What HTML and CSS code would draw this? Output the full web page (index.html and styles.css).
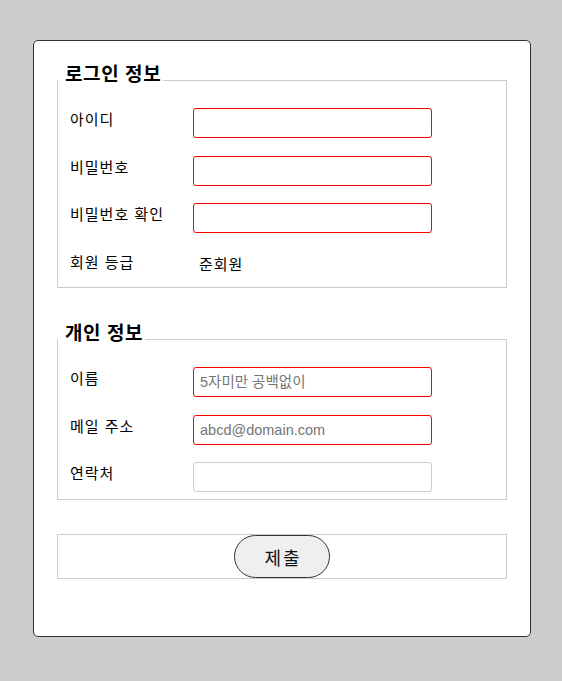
FILE: index.html
```html
<!DOCTYPE html>
<html lang="ko">
<head>
<meta charset="utf-8">
<title>회원 가입</title>
<link rel="stylesheet" href="styles.css">
</head>
<body>
<form class="card">
  <fieldset class="group group-first">
    <legend class="group-title">로그인 정보</legend>
    <div class="rows">
      <label class="label" for="uid">아이디</label>
      <input class="field invalid" id="uid" type="text">
      <label class="label" for="pw">비밀번호</label>
      <input class="field invalid" id="pw" type="password">
      <label class="label" for="pw2">비밀번호 확인</label>
      <input class="field invalid" id="pw2" type="password">
      <span class="label">회원 등급</span>
      <span class="value">준회원</span>
    </div>
  </fieldset>
  <fieldset class="group group-second">
    <legend class="group-title">개인 정보</legend>
    <div class="rows">
      <label class="label" for="name">이름</label>
      <input class="field invalid" id="name" type="text" placeholder="5자미만 공백없이">
      <label class="label" for="mail">메일 주소</label>
      <input class="field invalid" id="mail" type="text" placeholder="abcd@domain.com">
      <label class="label" for="tel">연락처</label>
      <input class="field" id="tel" type="text">
    </div>
  </fieldset>
  <div class="actions">
    <button class="submit" type="button">제출</button>
  </div>
</form>
</body>
</html>
```
FILE: styles.css
```css
html, body {
  margin: 0;
  padding: 0;
  background: #cccccc;
}
body {
  font-family: "Liberation Sans", "Noto Sans CJK KR", sans-serif;
  color: #000;
  min-height: 681px;
}
.card {
  box-sizing: border-box;
  width: 498px;
  margin: 40px 0 0 33px;
  padding: 24px 23px 57px 23px;
  background: #fff;
  border: 1px solid #333;
  border-radius: 5px;
}
.group {
  margin: 0;
  padding: 13px 12px 7px 12px;
  border: 1px solid #cccccc;
  min-width: 0;
}
.group-first {
  padding-bottom: 6.5px;
}
.group-second {
  margin-top: 36px;
}
.group-title {
  margin-left: -12px;
  padding: 0 2px 10px 7px;
  font-size: 19px;
  line-height: 20px;
  letter-spacing: 0.6px;
  font-weight: bold;
}
.rows {
  display: grid;
  grid-template-columns: 123px 239px;
  grid-auto-rows: 30px;
  row-gap: 17.5px;
}
.label {
  font-size: 15px;
  line-height: 24px;
  letter-spacing: 1px;
  align-self: start;
}
.value {
  font-size: 15px;
  line-height: 28px;
  letter-spacing: 1px;
  padding-left: 6px;
}
.field {
  box-sizing: border-box;
  width: 239px;
  height: 30px;
  margin: 0;
  padding: 0 6px;
  border: 1px solid #cccccc;
  border-radius: 3px;
  font-family: "Liberation Sans", "Noto Sans CJK KR", sans-serif;
  font-size: 14.5px;
  background: #fff;
  outline: none;
}
.field.invalid {
  border-color: #ff0000;
}
.field::placeholder {
  color: #757575;
}
.actions {
  margin-top: 34px;
  border: 1px solid #cccccc;
  display: flex;
  justify-content: center;
}
.submit {
  box-sizing: border-box;
  width: 96px;
  height: 43px;
  border: 1px solid #333;
  border-radius: 22px;
  background: #efefef;
  font-family: "Liberation Sans", "Noto Sans CJK KR", sans-serif;
  font-size: 18px;
  letter-spacing: 2px;
  color: #111;
  padding: 0 0 0 2px;
}
```
